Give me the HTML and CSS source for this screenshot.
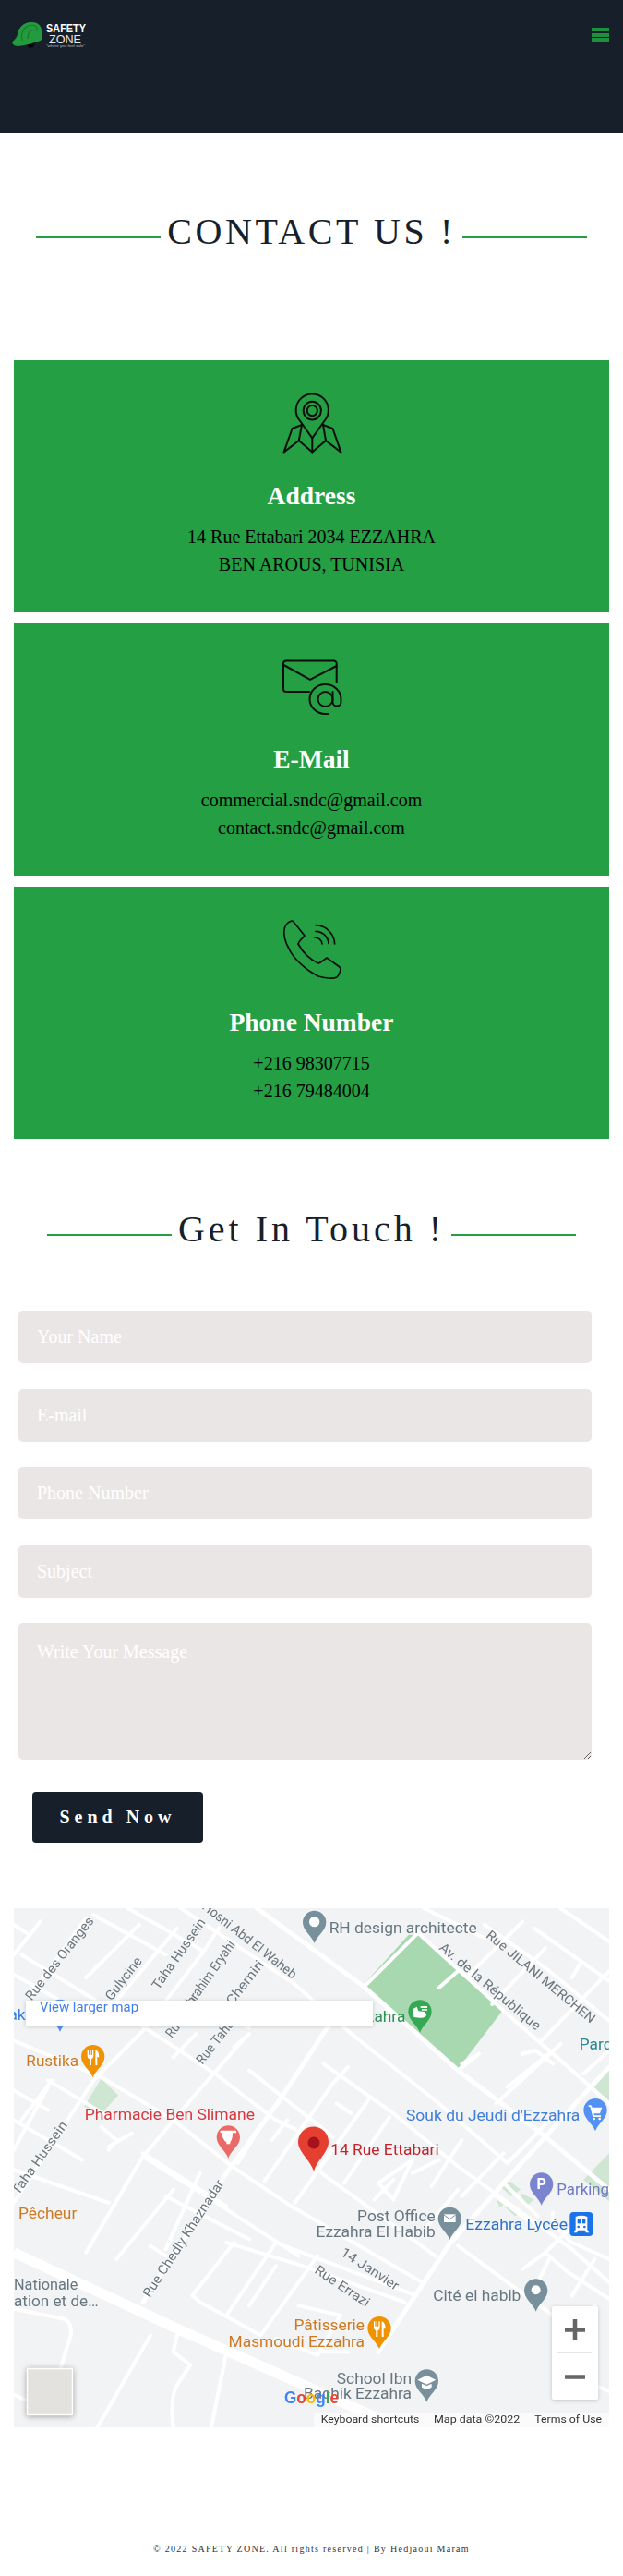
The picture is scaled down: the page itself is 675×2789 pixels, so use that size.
FILE: index.html
```html
<!DOCTYPE html>
<html lang="en">
<head>
<meta charset="utf-8">
<title>Contact Us - Safety Zone</title>
<link rel="stylesheet" href="styles.css">
</head>
<body>
<header class="site-header">
  <svg class="logo" viewBox="0 0 120 60" width="120" height="60" aria-label="Safety Zone">
    <path class="logo-shadow" d="M30 48 L38 46 L36 51 L31 52Z"/>
    <path class="logo-helmet" d="M13 46 C15 43 18 42 19 37 C20 29 27 23 35 24 C42 24 46 29 45 36 C45 40 46 42 44 44 C36 47 28 49 20 50 C17 50 14 49 13 46Z"/>
    <path class="logo-ridge" d="M24 44 C22 36 26 28 34 27 C39 27 41 30 40 33 C34 31 30 34 30 42"/>
    <text class="logo-safety" x="50" y="35" textLength="43" lengthAdjust="spacingAndGlyphs">SAFETY</text>
    <text class="logo-zone" x="53" y="47" textLength="35" lengthAdjust="spacingAndGlyphs">ZONE</text>
    <text class="logo-tag" x="50" y="51" textLength="42" lengthAdjust="spacingAndGlyphs">"where you feel safe"</text>
  </svg>
  <button class="menu-toggle" type="button" aria-label="Menu"><span></span><span></span><span></span></button>
</header>

<main>
  <h2 class="rule-heading first">CONTACT US !</h2>

  <section class="cards">
    <article class="card">
      <svg class="card-icon" viewBox="0 0 70 70" width="70" height="70">
        <path d="M35.3 49.4 L21.5 30 A17.6 17.6 0 1 1 49 30 Z"/>
        <ellipse cx="35.3" cy="19.6" rx="9.6" ry="9.8"/>
        <circle cx="35.3" cy="19.6" r="5.6"/>
        <path d="M24 35 L13.6 39 L4.5 64.6 L20.8 52 L35.3 64.6 L50 52 L66.5 64.6 L57.5 39 L47 35"/>
        <path d="M24 35 L20.8 52 M47 35 L50 52 M35.3 49.4 V64.6"/>
      </svg>
      <h3>Address</h3>
      <p>14 Rue Ettabari 2034 EZZAHRA</p>
      <p>BEN AROUS, TUNISIA</p>
    </article>
    <article class="card">
      <svg class="card-icon" viewBox="0 0 70 70" width="70" height="70">
        <path d="M32 39 H7 a3 3 0 0 1 -3 -3 V8.5 a3 3 0 0 1 3 -3 H58.7 a3 3 0 0 1 3 3 V29"/>
        <path d="M4.4 10 L33 25.8 L61.7 11"/>
        <circle cx="49.5" cy="47" r="8"/>
        <path d="M57.5 39 V50 a4.5 4.5 0 0 0 9 0 V47 a17 16 0 1 0 -17 16 h3"/>
      </svg>
      <h3>E-Mail</h3>
      <p>commercial.sndc@gmail.com</p>
      <p>contact.sndc@gmail.com</p>
    </article>
    <article class="card">
      <svg class="card-icon thin" viewBox="0 0 70 70" width="70" height="70">
        <path d="M8 5 C10 3 13 1 15 3 L27 18 C25 21 21 23 20 27 C25 36 33 44 42 48 C45 47 48 44 51 42 L65 52 C67 54 65 60 62 63 C58 65 48 64 42 62 C28 55 14 42 10 32 C4 22 3 10 8 5Z"/>
        <path d="M39 6.7 A21 21 0 0 1 59.6 27 M39 13.3 A14 14 0 0 1 53 26.5 M38 20 A8 8 0 0 1 46 27"/>
      </svg>
      <h3>Phone Number</h3>
      <p>+216 98307715</p>
      <p>+216 79484004</p>
    </article>
  </section>

  <h2 class="rule-heading second">Get In Touch !</h2>

  <form class="contact-form">
    <input class="field" type="text" placeholder="Your Name">
    <input class="field" type="text" placeholder="E-mail">
    <input class="field" type="text" placeholder="Phone Number">
    <input class="field" type="text" placeholder="Subject">
    <textarea class="field message" placeholder="Write Your Message"></textarea>
    <button class="send" type="button">Send Now</button>
  </form>

  <section class="map-wrap">
    <svg class="map" viewBox="15 2066 645 562" width="645" height="562">
      <defs>
        <path id="pin" d="M0 0 C-8 -25 -38 -40 -38 -68 A38 38 0 1 1 38 -68 C38 -40 8 -25 0 0Z"/>
        <g id="fork"><path d="M-18 -90 V-72 Q-18 -62 -11 -60 V-40 H-5 V-60 Q2 -62 2 -72 V-90 H-2 V-74 H-6 V-90 H-10 V-74 H-14 V-90Z M8 -90 Q20 -86 20 -66 H14 V-40 H8Z"/></g>
      </defs>
      <rect class="m-bg" x="15" y="2066" width="645" height="562"/>

      <g transform="translate(15 2066) scale(.41135 .35842)">
        <path class="m-green" d="M918 235 L1040 80 L1075 80 L1290 305 L1170 485Z"/>
        <path class="m-lgreen" d="M185 600 L230 515 L275 565 L235 615Z M1568 480 L1520 530 L1568 590Z M1500 820 L1568 740 V885Z M1295 815 L1335 850 L1310 870 L1280 840Z M1265 865 L1300 885 L1280 905Z M1335 860 L1370 880 L1345 905Z M1290 900 L1345 915 L1320 930Z"/>
        <path class="m-road" d="M0 400 L230 510 L420 640 L575 780 L730 900 L1075 1130 M1060 70 L1290 310 L1500 520 L1568 590 M1240 50 L1400 180 L1568 340 M1370 60 L1568 220 M890 380 L1120 590 L1300 770 M330 350 L530 500 L690 640 L800 700 M620 490 L840 690 M810 800 L1110 1050 M815 470 L1000 620 L1170 780 L1290 880 L1470 1030 L1568 1130 M690 1010 L1060 1170 M560 1010 L760 1080 L1030 1190 M340 750 L520 880 L750 1050 M400 870 L620 1000 M0 790 L250 890 M0 640 L180 760 M0 50 L40 80 M20 140 L260 310 M210 20 L400 140 M300 0 L500 130 M0 200 L170 310 M440 0 L740 230 L890 380 M340 740 L560 900 M560 320 L620 360 M700 300 L780 350 M0 1210 L130 1240 Q155 1250 150 1290 L120 1400 M0 1470 L30 1485 M1080 0 L1240 90 M1440 0 L1568 100 M1120 240 L1170 190 M90 520 L250 630 M0 550 L90 610 M1300 540 L1420 430 M1180 470 L1225 440 M1340 440 L1375 430 L1420 470 M1420 920 Q1410 950 1470 1010 L1568 1060 M1400 1040 L1480 950 M1340 1090 L1400 1040 L1460 1100 L1568 1180 M1380 1130 L1410 1060 M1170 1020 L1360 1180 L1420 1230 M1290 830 L1380 930 M1270 870 L1350 940 M1220 920 L1160 1000 M1530 1060 L1470 1170 M1530 1200 L1500 1300 M1510 1430 L1568 1460"/>
        <path class="m-road" d="M40 270 L190 30 M190 210 L330 50 M270 280 L430 60 M0 140 L70 40 M0 890 L210 520 L340 370 L500 130 L540 60 M660 825 L840 530 L880 480 M590 770 L660 640 M740 890 L940 570 M870 830 L990 630 M190 1040 L340 750 L480 560 L610 390 M270 1060 L420 850 M400 1030 L490 800 M0 730 L90 540 M20 640 L100 520 M420 450 L480 380 M580 420 L620 380 M220 1568 L360 1290 M520 1568 L560 1340 M420 1568 Q410 1480 430 1440 L465 1380 L420 1340 L430 1290 M580 1010 L470 1170 L490 1190 L650 1290 L800 1050 M620 1200 L690 1080 M560 1230 L690 1010 M750 1200 L860 1230 L800 1350 L690 1300 M800 1340 L880 1340 M920 240 L1060 80 M1170 490 L1225 440 M1270 590 L1440 410 M1500 500 L1568 430 M1300 770 L1420 630 M1200 200 L1340 40 M1260 290 L1400 120 M1390 400 L1568 190 M1490 170 L1470 210 M1050 760 L1000 880 M1000 880 L960 830 L1050 760 M850 590 L890 620 M680 700 L720 640 M1050 800 L1120 760 M950 880 L1000 820 M1100 840 L1180 700 M1180 870 L1290 740 M1090 960 L1170 850 M250 720 L310 680 M250 730 L270 700 M230 660 L270 700 M360 1020 L400 1050"/>
        <path class="m-road wide" d="M640 0 L920 235 L1170 490 L1400 690 L1568 850 M960 1340 L1040 1200 L1150 1010 L1290 830 L1400 690 L1568 480 M340 1190 L560 800 L700 580 L820 370 L870 300"/>
        <path class="m-road major" d="M0 1040 L430 1270 L880 1500 L1010 1568"/>
      </g>

      <g transform="translate(0 2050) scale(.33333)">
        <text class="m-label" transform="translate(103 350) rotate(-52)" textLength="330" lengthAdjust="spacingAndGlyphs">Rue des Oranges</text>
        <text class="m-label" transform="translate(362 350) rotate(-52)" textLength="165" lengthAdjust="spacingAndGlyphs">Gulycine</text>
        <text class="m-label" transform="translate(515 315) rotate(-55)" textLength="270" lengthAdjust="spacingAndGlyphs">Taha Hussein</text>
        <text class="m-label" transform="translate(620 375) rotate(-55)" textLength="255" lengthAdjust="spacingAndGlyphs">Ibrahim Eryahi</text>
        <text class="m-label" transform="translate(755 365) rotate(-52)" textLength="170" lengthAdjust="spacingAndGlyphs">Chemiri</text>
        <text class="m-label" transform="translate(655 48) rotate(38)" textLength="375" lengthAdjust="spacingAndGlyphs">Hosni Abd El Waheb</text>
        <text class="m-label" transform="translate(558 472) rotate(-52)" textLength="150" lengthAdjust="spacingAndGlyphs">Rue Abd</text>
        <text class="m-label" transform="translate(658 558) rotate(-52)" textLength="170" lengthAdjust="spacingAndGlyphs">Rue Taha</text>
        <use href="#pin" class="m-blue-pin" transform="translate(195 450)"/>
        <text class="m-poi m-blue" x="83" y="412" text-anchor="end">Lak</text>
        <text class="m-poi m-orange" x="85" y="562" textLength="170" lengthAdjust="spacingAndGlyphs">Rustika</text>
        <use href="#pin" class="m-orange-pin" transform="translate(302 598)"/>
        <use href="#fork" class="m-white" transform="translate(302 598)"/>
        <text class="m-poi m-red" x="275" y="735" textLength="553" lengthAdjust="spacingAndGlyphs">Pharmacie Ben Slimane</text>
        <use href="#pin" class="m-pharm-pin" transform="translate(742 860)"/>
        <path class="m-white" d="M716 770 H768 V778 H756 Q756 800 748 808 V814 H736 V808 Q722 800 722 778 H716Z"/>
      </g>

      <g transform="translate(335 2050) scale(.33333)">
        <use href="#pin" class="m-grey-pin" transform="translate(17 162)"/>
        <circle class="m-white" cx="17" cy="92" r="17"/>
        <text class="m-poi m-grey" x="65" y="128" textLength="480" lengthAdjust="spacingAndGlyphs">RH design architecte</text>
        <text class="m-label" transform="translate(572 140) rotate(39.5)" textLength="445" lengthAdjust="spacingAndGlyphs">Rue JILANI MERCHEN</text>
        <text class="m-label" transform="translate(420 180) rotate(40)" textLength="415" lengthAdjust="spacingAndGlyphs">Av. de la République</text>
        <text class="m-poi m-dgreen" x="313" y="418" text-anchor="end">Ezzahra</text>
        <use href="#pin" class="m-green-pin" transform="translate(360 452)"/>
        <path class="m-white" d="M338 375 L350 368 L355 382 L375 384 L382 392 Q380 405 360 404 L340 402Z M362 366 H384 V372 H362Z M366 376 H384 V380 H366Z"/>
        <text class="m-poi m-teal" x="878" y="507">Parc</text>
        <text class="m-poi m-blue" x="315" y="738" textLength="565" lengthAdjust="spacingAndGlyphs">Souk du Jeudi d'Ezzahra</text>
        <use href="#pin" class="m-blue-pin" transform="translate(930 772)"/>
        <path class="m-white" d="M908 688 H916 L920 695 H952 L945 715 H925 L927 721 H948 V726 H922 L913 693 H908Z"/>
        <circle class="m-white" cx="926" cy="732" r="4"/><circle class="m-white" cx="944" cy="732" r="4"/>
        <text class="m-poi m-dred" x="70" y="848" textLength="352" lengthAdjust="spacingAndGlyphs">14 Rue Ettabari</text>
      </g>

      <g transform="translate(0 2340) scale(.33333)">
        <text class="m-label" transform="translate(60 112) rotate(-55)" textLength="280" lengthAdjust="spacingAndGlyphs">Taha Hussein</text>
        <text class="m-poi m-orange" x="60" y="185" textLength="190" lengthAdjust="spacingAndGlyphs">Pêcheur</text>
        <text class="m-poi m-grey" x="45" y="418" textLength="208" lengthAdjust="spacingAndGlyphs">Nationale</text>
        <text class="m-poi m-grey" x="45" y="472" textLength="275" lengthAdjust="spacingAndGlyphs">ation et de…</text>
        <text class="m-label" transform="translate(487 445) rotate(-57)" textLength="445" lengthAdjust="spacingAndGlyphs">Rue Chedly Khaznadar</text>
      </g>

      <g transform="translate(335 2340) scale(.33333)">
        <use href="#pin" class="m-purple-pin" transform="translate(755 143)"/>
        <text class="m-pin-letter" x="755" y="90" text-anchor="middle">P</text>
        <text class="m-poi m-purple" x="805" y="108" textLength="170" lengthAdjust="spacingAndGlyphs">Parking</text>
        <text class="m-poi m-grey" x="410" y="195" text-anchor="end">Post Office</text>
        <text class="m-poi m-grey" x="410" y="247" text-anchor="end">Ezzahra El Habib</text>
        <use href="#pin" class="m-grey-pin" transform="translate(457 255)"/>
        <path class="m-white" d="M438 172 H476 V198 H438Z"/>
        <path class="m-grey-stroke" d="M438 174 L457 188 L476 174"/>
        <text class="m-poi m-tblue" x="508" y="222" textLength="332" lengthAdjust="spacingAndGlyphs">Ezzahra Lycée</text>
        <rect class="m-bus" x="847" y="165" width="75" height="78" rx="12"/>
        <path class="m-white" d="M866 180 Q885 172 904 180 V222 L910 232 H900 L895 224 H875 L870 232 H860 L866 222Z"/>
        <rect class="m-bus" x="872" y="188" width="10" height="14"/><rect class="m-bus" x="888" y="188" width="10" height="14"/>
        <circle class="m-bus" cx="875" cy="213" r="4"/><circle class="m-bus" cx="895" cy="213" r="4"/>
        <text class="m-label" transform="translate(100 303) rotate(33)" textLength="215" lengthAdjust="spacingAndGlyphs">14 Janvier</text>
        <text class="m-label" transform="translate(15 360) rotate(34)" textLength="205" lengthAdjust="spacingAndGlyphs">Rue Errazi</text>
        <text class="m-poi m-grey" x="403" y="453" textLength="285" lengthAdjust="spacingAndGlyphs">Cité el habib</text>
        <use href="#pin" class="m-grey-pin" transform="translate(737 488)"/>
        <circle class="m-white" cx="737" cy="418" r="15"/>
        <text class="m-poi m-orange" x="180" y="548" text-anchor="end">Pâtisserie</text>
        <text class="m-poi m-orange" x="180" y="602" text-anchor="end">Masmoudi Ezzahra</text>
        <use href="#pin" class="m-orange-pin" transform="translate(228 610)"/>
        <use href="#fork" class="m-white" transform="translate(228 610)"/>
        <text class="m-poi m-grey" x="333" y="722" text-anchor="end">School Ibn</text>
        <text class="m-poi m-grey" x="333" y="772" text-anchor="end">Bachik Ezzahra</text>
        <use href="#pin" class="m-grey-pin" transform="translate(382 782)"/>
        <path class="m-white" d="M382 695 L412 710 L382 725 L352 710Z M366 722 L382 730 L398 722 V734 Q382 744 366 734Z"/>
        <rect class="m-barbg" x="15" y="818" width="960" height="46"/>
        <text class="m-small" x="38" y="850" textLength="320" lengthAdjust="spacingAndGlyphs">Keyboard shortcuts</text>
        <text class="m-small" x="405" y="850" textLength="280" lengthAdjust="spacingAndGlyphs">Map data ©2022</text>
        <text class="m-small" x="733" y="850" textLength="218" lengthAdjust="spacingAndGlyphs">Terms of Use</text>
      </g>

      <path class="m-redpin" d="M340 2351 C336 2338 323 2330 323 2319 A16.5 16.5 0 1 1 356 2319 C356 2330 344 2338 340 2351Z"/>
      <circle class="m-reddot" cx="340" cy="2320" r="6.5"/>

      <text class="m-google" x="308" y="2602" textLength="59" lengthAdjust="spacingAndGlyphs"><tspan class="g-blue">G</tspan><tspan class="g-red">o</tspan><tspan class="g-yellow">o</tspan><tspan class="g-blue">g</tspan><tspan class="g-green">l</tspan><tspan class="g-red">e</tspan></text>

      <rect class="m-box" x="28" y="2166" width="376" height="27"/>
      <text class="m-link" x="43" y="2178" textLength="107" lengthAdjust="spacingAndGlyphs">View larger map</text>

      <rect class="m-tile" x="29.500" y="2564.500" width="49" height="50" rx="1"/>

      <rect class="m-box" x="598" y="2497" width="50" height="101" rx="2"/>
      <path class="m-ctl" d="M612 2522.500 H634 M623 2511 V2534"/>
      <path class="m-ctl-line" d="M604 2547.500 H641"/>
      <path class="m-ctl" d="M612 2573.500 H634"/>
    </svg>
  </section>
</main>

<footer class="site-footer">© 2022 SAFETY ZONE. All rights reserved | By Hedjaoui Maram</footer>
</body>
</html>
```

FILE: styles.css
```css
* { box-sizing: border-box; }

html, body { margin: 0; padding: 0; }

body {
  font-family: "Liberation Serif", "Times New Roman", serif;
  background: #fff;
  color: #000;
}

.site-header {
  height: 144px;
  background: #171f2a;
  display: flex;
  justify-content: space-between;
  align-items: flex-start;
  padding-right: 15px;
}

.logo { display: block; }
.logo-helmet { fill: #239a3e; }
.logo-ridge { fill: none; stroke: #1a7a30; stroke-width: 1.2; }
.logo-shadow { fill: #05080a; }
.logo-safety { fill: #fff; font: bold 12px "Liberation Sans", sans-serif; }
.logo-zone { fill: #e8ecef; font: 13.5px "Liberation Sans", sans-serif; }
.logo-tag { fill: #b8bec4; font: 3.5px "Liberation Sans", sans-serif; }

.menu-toggle {
  margin: 30px 0 0;
  padding: 0;
  width: 19px;
  height: 15px;
  border: 0;
  background: none;
  display: flex;
  flex-direction: column;
  justify-content: space-between;
}
.menu-toggle span { display: block; height: 4px; background: #1f9040; }

.rule-heading {
  margin: 0;
  display: flex;
  justify-content: center;
  align-items: center;
  gap: 7px;
  font-size: 40px;
  line-height: 48px;
  font-weight: 400;
  color: #171f2a;
}
.rule-heading::before,
.rule-heading::after {
  content: "";
  width: 135px;
  height: 2px;
  margin-top: 13px;
  background: #249f43;
}
.rule-heading.first { margin-top: 82.5px; letter-spacing: 3.6px; }
.rule-heading.second { margin-top: 73.5px; letter-spacing: 4px; }

.cards {
  margin: 115.5px 15px 0;
  display: flex;
  flex-direction: column;
  gap: 12px;
}

.card {
  height: 273px;
  padding: 35px 20px 0;
  background: #249f43;
  text-align: center;
}
.card-icon {
  display: block;
  margin: 0 auto;
  fill: none;
  stroke: #0a0f0a;
  stroke-width: 2;
  stroke-linejoin: round;
  stroke-linecap: round;
}
.card-icon.thin { stroke-width: 1.7; }
.card h3 {
  margin: 25px 0 13px;
  font-size: 27.5px;
  line-height: 33px;
  font-weight: 700;
  color: #fff;
}
.card p {
  margin: 0;
  font-size: 20px;
  line-height: 30px;
  color: #000;
}

.contact-form {
  margin-top: 64.5px;
  padding: 0 34px 0 20px;
  display: flex;
  flex-direction: column;
  gap: 27.5px;
}
.field {
  display: block;
  width: 100%;
  height: 57px;
  padding: 0 20px;
  border: 0;
  border-radius: 5px;
  background: #ebe6e6;
  font: 20px "Liberation Serif", serif;
  color: #000;
}
.field::placeholder { color: #fff; opacity: 1; }
.message { height: 148px; padding-top: 20px; }

.send {
  align-self: flex-start;
  margin: 7px 0 0 15px;
  width: 185px;
  height: 55px;
  border: 0;
  border-radius: 4px;
  background: #171f2a;
  color: #fff;
  font: 700 20px "Liberation Serif", serif;
  letter-spacing: 5px;
}

.map-wrap { margin: 71px 15px 0; height: 562px; }
.map { display: block; filter: blur(.35px); }

.m-bg { fill: #f2f3f5; }
.m-road { fill: none; stroke: #fff; stroke-width: 4; stroke-linecap: round; stroke-linejoin: round; vector-effect: non-scaling-stroke; }
.m-road.wide { stroke-width: 5; }
.m-road.major { stroke-width: 11; stroke-linecap: butt; }
.m-green { fill: #a8d8b0; }
.m-lgreen { fill: #cfe6d2; }
.m-white { fill: #fff; }
.m-label { font: 43px Roboto, sans-serif; fill: #6b767d; }
.m-poi { font: 52px Roboto, sans-serif; }
.m-blue { fill: #3f7fdc; }
.m-tblue { fill: #2f73c9; }
.m-orange { fill: #cd7a25; }
.m-red { fill: #d7373f; }
.m-dred { fill: #c5222a; }
.m-grey { fill: #677780; }
.m-dgreen { fill: #2a9352; }
.m-teal { fill: #27898f; }
.m-purple { fill: #6f78c4; }
.m-blue-pin { fill: #5491f5; }
.m-orange-pin { fill: #f09300; }
.m-pharm-pin { fill: #ea6a68; }
.m-grey-pin { fill: #78909c; }
.m-green-pin { fill: #34a853; }
.m-purple-pin { fill: #7b84cf; }
.m-pin-letter { font: 700 48px Roboto, sans-serif; fill: #fff; }
.m-grey-stroke { fill: none; stroke: #78909c; stroke-width: 3; }
.m-bus { fill: #1a73e8; }
.m-barbg { fill: rgba(255, 255, 255, .65); }
.m-small { font: 33px Roboto, sans-serif; fill: #333; }
.m-redpin { fill: #e53f32; }
.m-reddot { fill: #a5141a; }
.m-google { font: 700 19px "Liberation Sans", sans-serif; }
.g-blue { fill: #4285f4; }
.g-red { fill: #ea4335; }
.g-yellow { fill: #fbbc05; }
.g-green { fill: #34a853; }
.m-box { fill: #fff; filter: drop-shadow(0 1px 2px rgba(0, 0, 0, .2)); }
.m-link { font: 15px Roboto, sans-serif; fill: #427fed; }
.m-tile { fill: #e4e2de; stroke: #fff; stroke-width: 1.5; filter: drop-shadow(0 1px 3px rgba(0, 0, 0, .35)); }
.m-ctl { fill: none; stroke: #666; stroke-width: 4.5; }
.m-ctl-line { fill: none; stroke: #e6e6e6; stroke-width: 1; }

.site-footer {
  margin-top: 126px;
  padding-bottom: 23px;
  text-align: center;
  font-size: 10px;
  line-height: 12px;
  letter-spacing: 1.28px;
  color: #333;
}
```
